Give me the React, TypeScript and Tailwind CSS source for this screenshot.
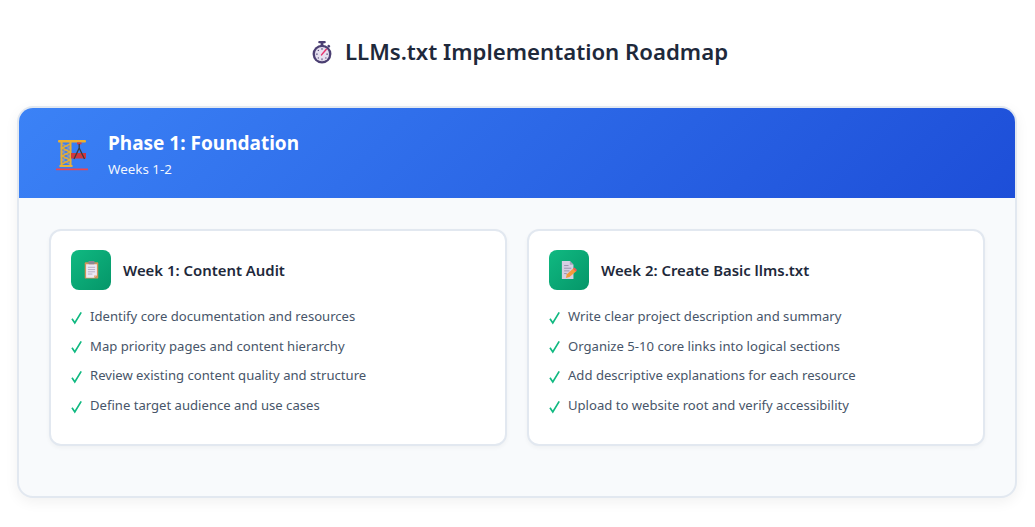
import React from "react";

const FONT = "font-['Noto_Sans',sans-serif]";

function Stopwatch() {
  return (
    <svg width="20" height="24" viewBox="1.5 0 21 25.5" className="shrink-0 ml-[5px]">
      <rect x="8" y="1" width="8" height="2.5" rx="1" fill="#4b3f72" />
      <rect x="10.5" y="3" width="3" height="3" fill="#4b3f72" />
      <rect x="18" y="5" width="3" height="2.5" rx="1" transform="rotate(40 19 6)" fill="#4b3f72" />
      <circle cx="12" cy="15" r="10" fill="#4b3f72" />
      <circle cx="12" cy="15" r="7.6" fill="#e6e0ef" />
      <g fill="#4b3f72">
        <rect x="11.5" y="8.5" width="1" height="2" />
        <rect x="11.5" y="19.5" width="1" height="2" />
        <rect x="5.5" y="14.5" width="2" height="1" />
        <rect x="16.5" y="14.5" width="2" height="1" />
        <rect x="7.5" y="10.5" width="1.2" height="1.2" />
        <rect x="7.5" y="18.5" width="1.2" height="1.2" />
        <rect x="15.5" y="18.5" width="1.2" height="1.2" />
      </g>
      <path d="M11.5 15.8 16.6 9.8" stroke="#e8336d" strokeWidth="1.6" strokeLinecap="round" />
    </svg>
  );
}

function Crane() {
  return (
    <svg width="32" height="32" viewBox="0 0 32 32" className="shrink-0 mt-[4px]">
      <rect x="2" y="1" width="28" height="2.4" rx="1" fill="#eeb02e" />
      <path d="M6 5 14 9 6 13 14 17 6 21 14 25" fill="none" stroke="#8a97bb" strokeWidth="1.6" />
      <path d="M14 5 6 9 14 13 6 17 14 21 6 25" fill="none" stroke="#e2ab36" strokeWidth="1.6" />
      <path d="M5.5 3v24M14.5 3v24" stroke="#e8ae35" strokeWidth="2" />
      <rect x="3.5" y="26" width="13" height="2" fill="#e8b13a" />
      <rect x="0" y="29.5" width="32" height="1.7" fill="#f0444f" />
      <rect x="15" y="14" width="15" height="5.5" fill="#d0383f" />
      <rect x="21" y="3.4" width="4.5" height="2" fill="#d63c46" />
      <path d="M23.2 5v4M23.2 9 18 20M23.2 9 28.5 20" fill="none" stroke="#3f3a3a" strokeWidth="1.3" />
    </svg>
  );
}

function Clipboard() {
  return (
    <svg width="15" height="18" viewBox="0 0 16 20">
      <rect x="0.5" y="1.5" width="15" height="18" rx="1" fill="#d0935a" />
      <path d="M2 3.5h12v12.5l-3 2.5H2z" fill="#ece9f4" />
      <path d="M14 16l-3 2.5V16z" fill="#e0a56c" />
      <rect x="4.5" y="0" width="7" height="3.5" rx="1" fill="#8b8794" />
      <path d="M4 7h8M4 9.5h8M4 12h8M4 14.5h5" stroke="#a9a4bf" strokeWidth="0.9" />
    </svg>
  );
}

function Memo() {
  return (
    <svg width="16" height="18" viewBox="0 0 18 20">
      <path d="M1 0h9l4 4v16H1z" fill="#d6cfe3" />
      <path d="M10 0l4 4h-4z" fill="#aaa2bd" />
      <path d="M3.5 5h5M3.5 8h8M3.5 11h6M3.5 14h3" stroke="#8d86a2" strokeWidth="0.9" />
      <path d="M5.5 19l1-4.2 8-7 3 3.2-8 7z" fill="#f59a3c" />
      <path d="M13.5 8.6l1.7-1.5 2.8 3-1.6 1.5z" fill="#ef5a5a" />
    </svg>
  );
}

function Check() {
  return (
    <svg width="12" height="14" viewBox="0 0 12 14" className="shrink-0 mt-[2px]">
      <path d="M1 7.8 3.8 12 10.2 1.4" fill="none" stroke="#10b981" strokeWidth="1.7" />
    </svg>
  );
}

type WeekProps = {
  icon: React.ReactNode;
  title: string;
  items: string[];
};

function WeekCard({ icon, title, items }: WeekProps) {
  return (
    <div className="flex-1 bg-white border-2 border-[#e2e8f0] rounded-xl px-5 pt-[19px] pb-[24px] shadow-[0_2px_4px_rgba(0,0,0,0.04)]">
      <div className="flex items-center gap-3 mb-[12px]">
        <div className="size-10 rounded-lg flex items-center justify-center bg-[linear-gradient(135deg,#10b981,#059669)]">
          {icon}
        </div>
        <h3 className="text-[14.9px] font-semibold text-[#1e293b]">{title}</h3>
      </div>
      <ul>
        {items.map((item) => (
          <li key={item} className="flex items-center gap-[7px] h-[29.6px] text-[13.1px] text-[#475569]">
            <Check />
            <span>{item}</span>
          </li>
        ))}
      </ul>
    </div>
  );
}

export default function App() {
  return (
    <div className={`${FONT} bg-white w-[1035px] h-[527px] overflow-hidden`}>
      <h1 className="h-[106px] flex items-center justify-center gap-[13px] pb-[2px] text-[22.2px] font-semibold text-[#1e293b]">
        <Stopwatch />
        LLMs.txt Implementation Roadmap
      </h1>
      <div className="ml-[17px] w-[1000px] h-[391.5px] rounded-2xl border-2 border-[#e2e8f0] overflow-hidden bg-[#f8fafc] shadow-[0_4px_14px_rgba(0,0,0,0.06)]">
        <div className="h-[90px] flex items-center gap-5 pl-[37px] bg-[linear-gradient(135deg,#3b82f6,#1d4ed8)]">
          <Crane />
          <div>
            <h2 className="text-[19px] font-bold text-white leading-7 mt-[1px]">Phase 1: Foundation</h2>
            <p className="text-[13.4px] text-white/95 mt-[2px] leading-5">Weeks 1-2</p>
          </div>
        </div>
        <div className="flex gap-5 px-[30px] pt-[31px]">
          <WeekCard
            icon={<Clipboard />}
            title="Week 1: Content Audit"
            items={[
              "Identify core documentation and resources",
              "Map priority pages and content hierarchy",
              "Review existing content quality and structure",
              "Define target audience and use cases",
            ]}
          />
          <WeekCard
            icon={<Memo />}
            title="Week 2: Create Basic llms.txt"
            items={[
              "Write clear project description and summary",
              "Organize 5-10 core links into logical sections",
              "Add descriptive explanations for each resource",
              "Upload to website root and verify accessibility",
            ]}
          />
        </div>
      </div>
    </div>
  );
}
